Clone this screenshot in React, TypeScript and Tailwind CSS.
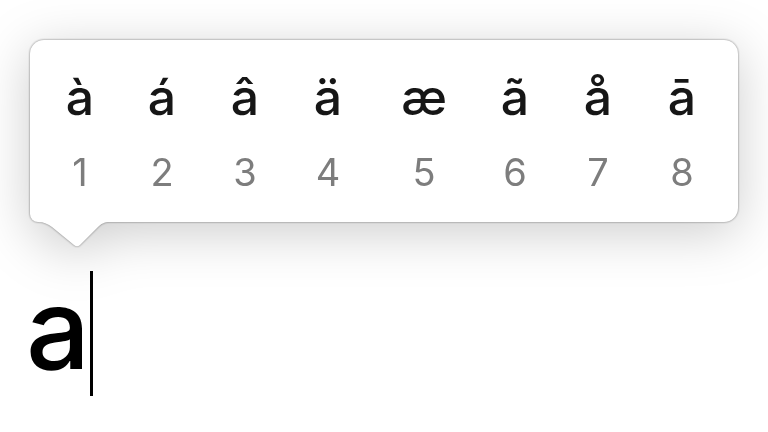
import React from "react";

const chars = [
  { c: "à", n: "1", ml: "ml-[30px]" },
  { c: "á", n: "2", ml: "ml-[42px]" },
  { c: "â", n: "3", ml: "ml-[43px]" },
  { c: "ä", n: "4", ml: "ml-[43px]" },
  { c: "æ", n: "5", ml: "ml-[56px]" },
  { c: "ã", n: "6", ml: "ml-[51px]" },
  { c: "å", n: "7", ml: "ml-[43px]" },
  { c: "ā", n: "8", ml: "ml-[44px]" },
];

export default function App() {
  return (
    <div
      className="w-[768px] h-[432px] bg-white overflow-hidden flex flex-col pl-[30px] pt-[40px]"
      style={{ fontFamily: "Inter, 'Liberation Sans', sans-serif" }}
    >
      <div className="relative w-[708px] h-[182px] [filter:drop-shadow(0_0_0.8px_rgba(0,0,0,0.5))_drop-shadow(0_10px_26px_rgba(0,0,0,0.2))]">
        <div className="w-full h-full bg-white rounded-[14px] rounded-bl-[8px] flex">
          {chars.map((k) => (
            <div key={k.n} className={`${k.ml} w-[40px] flex flex-col items-center pt-[32px]`}>
              <span className="text-[50px] leading-none font-medium text-[#161616]">{k.c}</span>
              <span className="mt-[31px] text-[38px] leading-none font-normal text-[#7d7d7d]">{k.n}</span>
            </div>
          ))}
        </div>
        <svg
          className="absolute left-[8px] top-[180px]"
          width="72"
          height="30"
          viewBox="0 0 72 30"
        >
          <path
            d="M0,0 L0,2 C6,2 10,4 14,7 L36,25 Q39,27.5 42,25 L60,7 C63,4 66,2 72,2 L72,0 Z"
            fill="#ffffff"
          />
        </svg>
      </div>
      <div className="mt-[50px] flex items-start">
        <span className="text-[113px] leading-none font-medium text-black -ml-[4px]">a</span>
        <div className="w-[3px] h-[125px] bg-black -mt-[1px]" />
      </div>
    </div>
  );
}
